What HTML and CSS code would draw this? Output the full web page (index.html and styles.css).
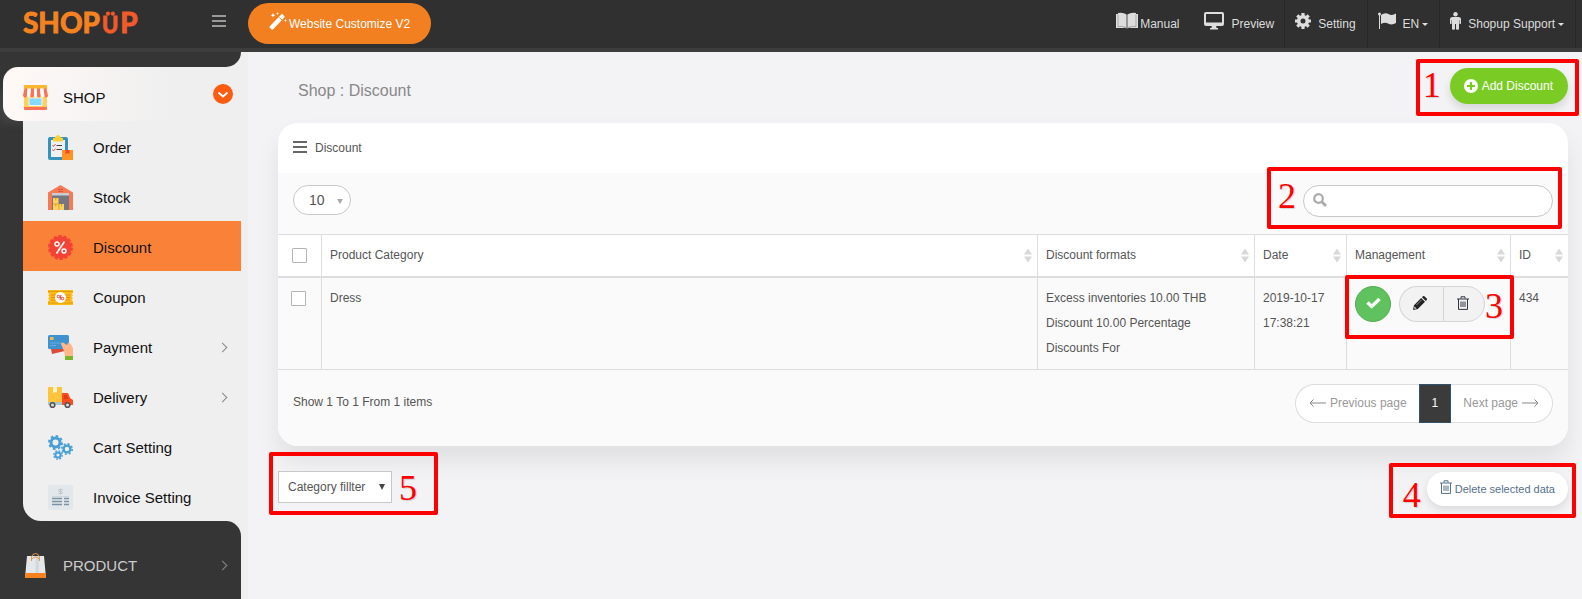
FILE: index.html
```html
<!DOCTYPE html>
<html lang="en">
<head>
    <meta charset="UTF-8">
    <meta name="viewport" content="width=device-width, initial-scale=1.0">
    <title>Shop : Discount</title>
    <link rel="stylesheet" href="styles.css">
</head>
<body>
    <header class="topbar">
        <div class="brand">
            <a class="logo" href="#">SHOP<span class="logo-smile">Ü</span><span class="logo-end">P</span></a>
            <button class="menu-toggle" type="button" aria-label="Toggle menu">
                <svg width="14" height="12" viewBox="0 0 14 12"><path d="M0 1h14M0 6h14M0 11h14" stroke="#999" stroke-width="2"/></svg>
            </button>
        </div>
        <a class="customize" href="#">
            <svg width="18" height="18" viewBox="0 0 18 18" fill="#fff"><path d="M.8 14.200 12.200 2.500q.8-.8 1.600 0l1.500 1.500q.8.800 0 1.600L4.200 17.200q-.8.800-1.600 0L.8 15.800q-.8-.8 0-1.600z"/><path d="M10.500 5.500 13 8" stroke="#f28020"/><path d="m4 1 .7 1.600 1.600.7-1.600.7L4 5.600 3.300 4l-1.600-.7 1.600-.7zM8.500 0l.5 1 1 .5-1 .5-.5 1-.5-1-1-.5 1-.5zM16.500 7l.5 1 1 .5-1 .5-.5 1-.5-1-1-.5 1-.5z"/></svg>
            Website Customize V2
        </a>
        <nav class="topnav">
            <a class="manual" href="#">
                <svg width="22" height="18" viewBox="0 0 22 18" fill="#ddd"><path d="M0 2h2V1q5-1 8.600 1.500v14Q9 15.500 7 16H0zM22 2h-2V1q-5-1-8.600 1.500v14Q13 15.500 15 16h7z"/><path d="M2 2.500v12q4.500-.6 8 1M20 2.500v12q-4.500-.6-8 1" fill="none" stroke="#888" stroke-width=".6"/></svg>
                Manual
            </a>
            <a href="#">
                <svg width="20" height="18" viewBox="0 0 20 18"><rect x="1" y="1" width="18" height="12" rx="1" fill="none" stroke="#ddd" stroke-width="2"/><path d="M1 10.500h18V13H1zM8 13h4l.5 3H14v1.500H6V16h1.500z" fill="#ddd"/></svg>
                Preview
            </a>
            <a class="split" href="#">
                <svg width="16" height="16" viewBox="0 0 16 16"><circle cx="8" cy="8" r="4.300" fill="none" stroke="#ddd" stroke-width="3.600"/><path d="M8 0v3M8 13v3M0 8h3M13 8h3M2.300 2.300l2 2M11.700 11.700l2 2M13.700 2.300l-2 2M4.300 11.700l-2 2" stroke="#ddd" stroke-width="3.200"/></svg>
                Setting
            </a>
            <a class="split" href="#">
                <svg width="18" height="17" viewBox="0 0 18 17" fill="#ddd"><circle cx="1.500" cy="2" r="1.500"/><path d="M1 2h1v15H1zM3 3q4-3 7.500-1T18 1.500V11q-4 2.500-7.500.7T3 12z"/></svg>
                <span>EN<i class="caret"></i></span>
            </a>
            <a class="split" href="#">
                <svg width="11" height="18" viewBox="0 0 11 18" fill="#ddd"><circle cx="5.500" cy="2.200" r="2.200"/><path d="M2 5h7q2 .5 2 2v4.500q-.8 1-1.600 0V8H9v9q-1.500 1.700-3 0v-5H5v5q-1.500 1.700-3 0V8h-.4v3.500q-.8 1-1.600 0V7q0-1.500 2-2z"/></svg>
                <span>Shopup Support<i class="caret"></i></span>
            </a>
        </nav>
    </header>

    <div class="layout">
        <aside class="sidebar">
            <div class="cap"></div>
            <div class="group">
                <a class="group-title" href="#">
                    <svg width="25" height="25" viewBox="0 0 25 25"><path d="M1 6h23v17H1z" fill="#ffd15c"/><path d="M1 1q0-1 1-1h21q1 0 1 1v3H1z" fill="#fdb62f"/><path d="M1 22h23v2q0 1-1 1H2q-1 0-1-1z" fill="#ff7058"/><path d="M6 13h13v7.500H6z" fill="#84dbff" stroke="#f2f2f2"/><path d="M1.500 3.500h3L4 11q-.5 1.500-2 1.500T0 10.500zM8 3.500h3V11q-.5 1.500-1.800 1.500T7.200 11zM14 3.500h3l.8 7.500q-.5 1.500-1.800 1.500T14 11zM20.500 3.500h3L25 10.500q0 2-1.600 2T21.400 11z" fill="#ff7058"/><path d="M4.500 3.500H8L7.200 11q-.5 1.500-1.700 1.500T4 11zM11 3.500h3V11q-.3 1.500-1.500 1.500T11 11zM17 3.500h3.500l.9 7.500q-.5 1.500-1.800 1.500T17.800 11z" fill="#fff"/></svg>
                    <span>SHOP</span>
                    <svg class="open" width="20" height="20" viewBox="0 0 20 20"><circle cx="10" cy="10" r="10" fill="#fc5c10"/><path d="m5.500 8.500 4.500 4 4.500-4" fill="none" stroke="#fff" stroke-width="2"/></svg>
                </a>
                <nav class="submenu">
                    <a href="#">
                        <svg width="25" height="25" viewBox="0 0 25 25"><rect y="2" width="20" height="23" rx="2" fill="#3493bd"/><path d="M3 5h14v17H3z" fill="#eef0f2"/><path d="M5 3q2.500 0 3-1.500Q8.500 0 10 0t2 1.500Q12.500 3 15 3v3.500H5z" fill="#ffcf36"/><path d="m4.500 10 1 1.500L7.500 9M4.500 14.500l1 1.500 2-2.500" fill="none" stroke="#f0503c"/><path d="M8.500 10.500H14M8.500 14.500H14" stroke="#444" stroke-width="1.200"/><path d="M14 15h11v10H14z" fill="#ff9324"/><path d="M17.500 15h4v4l-2-1-2 1z" fill="#f3462b"/></svg>
                        Order
                    </a>
                    <a href="#">
                        <svg width="25" height="25" viewBox="0 0 25 25"><path d="M12.500 0 25 7.500V25H0V7.500z" fill="#f47b55"/><path d="M4 9h17v16H4z" fill="#727780"/><path d="M4 8h17v2.500H4z" fill="#c9cdd2"/><path d="M10 4.500h5M10 6.500h5" stroke="#d9583b"/><path d="M5 13h5.500v6H16v6H5z" fill="#ffd15c"/><path d="M5 19h6v6M7.700 13v2.500M7.700 19v2.500M13.500 19v2.500" fill="none" stroke="#d9a52b"/></svg>
                        Stock
                    </a>
                    <a class="active" href="#">
                        <svg width="25" height="25" viewBox="0 0 25 25"><circle cx="12.500" cy="12.500" r="11" fill="#f44336"/><circle cx="12.500" cy="12.500" r="11" fill="none" stroke="#f44336" stroke-width="3" stroke-dasharray="3.300 1.640"/><circle cx="9" cy="9" r="2" fill="none" stroke="#fff" stroke-width="1.500"/><circle cx="16" cy="16" r="2" fill="none" stroke="#fff" stroke-width="1.500"/><path d="m16.500 6.500-8 12" stroke="#fff" stroke-width="1.600"/></svg>
                        Discount
                    </a>
                    <a href="#">
                        <svg width="25" height="25" viewBox="0 0 25 25"><path d="M0 5h25v3l-1.500 1L25 10.500l-1.500 1.500 1.500 1.500-1.500 1.500L25 16.500V20H0v-3.500L1.500 15 0 13.500 1.500 12 0 10.500 1.500 9 0 8z" fill="#fbbc16"/><path d="M0 6.500h25M0 18h25" stroke="#e49c0c"/><path d="M3 10h5M3 12.500h5M3 15h5M17 10h5M17 12.500h5M17 15h5" stroke="#ee8a14"/><circle cx="12.500" cy="12.500" r="5.500" fill="#fff"/><circle cx="10.500" cy="11.500" r="1.300" fill="none" stroke="#e6493a"/><circle cx="14.500" cy="13.500" r="1.300" fill="none" stroke="#e6493a"/><path d="m12 15 1-5" stroke="#e6493a"/></svg>
                        Coupon
                    </a>
                    <a class="has-sub" href="#">
                        <svg width="25" height="25" viewBox="0 0 25 25"><path d="m3 14 16-3 2 4-17 4z" fill="#dc4a3c"/><rect width="21" height="14" rx="1.500" fill="#3e92d0"/><path d="M2 2h3.500v3H2z" fill="#f8b84e"/><path d="M2 8h11M2 10.500h6" stroke="#63acdf"/><path d="M13 9q0-2 2-1.500l4 2.500 1-2q1-1 2 0l3 5v8h-8l-1-5z" fill="#fdb789"/><path d="M17 21h8v4h-8z" fill="#7cb52c"/></svg>
                        Payment
                    </a>
                    <a class="has-sub" href="#">
                        <svg width="25" height="25" viewBox="0 0 25 25"><path d="M0 2h14v15H0z" fill="#ffc43c"/><path d="M5 2h4v6L7 7 5 8z" fill="#fff3d2"/><path d="M14 8h6l2 5 3 2v5H14z" fill="#ff4b20"/><path d="M16 10h3l1 4h-4z" fill="#e23a1a"/><path d="M0 17h14v3H0z" fill="#a9c9cb"/><circle cx="4.500" cy="20" r="2.300" fill="#ddd" stroke="#555" stroke-width="1.600"/><circle cx="19.500" cy="20" r="2.300" fill="#ddd" stroke="#555" stroke-width="1.600"/></svg>
                        Delivery
                    </a>
                    <a href="#">
                        <svg width="25" height="25" viewBox="0 0 25 25" fill="none" stroke="#479fd6"><circle cx="7.500" cy="7.500" r="4.500" stroke-width="3"/><circle cx="7.500" cy="7.500" r="6.600" stroke-width="1.800" stroke-dasharray="2.600 2.580"/><circle cx="19" cy="14" r="3.400" stroke-width="2.400"/><circle cx="19" cy="14" r="5.200" stroke-width="1.600" stroke-dasharray="2 2.080"/><circle cx="10" cy="20" r="2.600" stroke-width="2"/><circle cx="10" cy="20" r="4.200" stroke-width="1.400" stroke-dasharray="1.700 1.600"/></svg>
                        Cart Setting
                    </a>
                    <a href="#">
                        <svg width="25" height="25" viewBox="0 0 25 25"><rect width="25" height="25" rx="2" fill="#e1e7ea"/><path d="M15 5q-2.500-1.500-4.500 0 0 1.500 2 1.500t2 1.500q-2 1.500-4.500 0M12.500 3.500v6" fill="none" stroke="#c0c8cd"/><path d="M4 11.500h17" stroke="#cdd5da"/><path d="M4 13.500h10M4 16.500h10M4 19.500h10M16 13.500h5M16 16.500h5M16 19.500h5" stroke="#7b93a5" stroke-width="1.400"/></svg>
                        Invoice Setting
                    </a>
                </nav>
            </div>
            <nav class="closed">
                <a class="has-sub" href="#">
                    <svg width="25" height="25" viewBox="0 0 25 25"><path d="M4 3h17l2 22H2z" fill="#e4e8ea"/><path d="M12.500 3H16v17h-3.500z" fill="#d3d9dd"/><path d="M2.500 20h20l.5 5H2z" fill="#f5811f"/><path d="M8.500 8V4q1-3.500 4-3.500t4 3.500v4M9 6q3.500-4 7 0" fill="none" stroke="#e09a55"/></svg>
                    PRODUCT
                </a>
            </nav>
        </aside>

        <main class="content">
            <div class="page-head">
                <h1>Shop : Discount</h1>
                <div class="add-wrap">
                    <button class="add" type="button">
                        <svg width="14" height="14" viewBox="0 0 14 14"><circle cx="7" cy="7" r="7" fill="#fff"/><path d="M7 3v8M3 7h8" stroke="#7acc24" stroke-width="2.200"/></svg>
                        Add Discount
                    </button>
                    <span class="mark mark-add">1</span>
                </div>
            </div>

            <section class="card">
                <h2>
                    <svg width="14" height="12" viewBox="0 0 14 12"><path d="M0 1h14M0 6h14M0 11h14" stroke="#666" stroke-width="2"/></svg>
                    Discount
                </h2>
                <div class="toolbar">
                    <div class="length">
                        <select aria-label="Rows per page"><option>10</option></select>
                    </div>
                    <div class="search">
                        <svg width="14" height="14" viewBox="0 0 14 14"><circle cx="5.500" cy="5.500" r="4.300" fill="none" stroke="#aaa" stroke-width="2.200"/><path d="m9 9 4 4" stroke="#aaa" stroke-width="2.600"/></svg>
                        <input type="search" aria-label="Search">
                        <span class="mark mark-search">2</span>
                    </div>
                </div>
                <table>
                    <colgroup>
                        <col class="c-check"><col><col class="c-format"><col class="c-date"><col class="c-manage"><col class="c-id">
                    </colgroup>
                    <thead>
                        <tr>
                            <th class="check"><input type="checkbox" aria-label="Select all"></th>
                            <th><button class="sort" type="button">Product Category</button></th>
                            <th><button class="sort" type="button">Discount formats</button></th>
                            <th><button class="sort" type="button">Date</button></th>
                            <th><button class="sort" type="button">Management</button></th>
                            <th><button class="sort" type="button">ID</button></th>
                        </tr>
                    </thead>
                    <tbody>
                        <tr>
                            <td class="check"><input type="checkbox" aria-label="Select Dress"></td>
                            <td>Dress</td>
                            <td>Excess inventories 10.00 THB<br>Discount 10.00 Percentage<br>Discounts For</td>
                            <td>2019-10-17 17:38:21</td>
                            <td>
                                <div class="actions">
                                    <button class="status" type="button" aria-label="Enabled">
                                        <svg width="15" height="12" viewBox="0 0 15 12"><path d="m1.500 5.500 4.200 4L13.500 2" fill="none" stroke="#fff" stroke-width="3.400"/></svg>
                                    </button>
                                    <div class="pair">
                                        <button type="button" aria-label="Edit">
                                            <svg width="14" height="14" viewBox="0 0 14 14" fill="#222"><path d="m0 14 1-4.800L8.200 2 12 5.800 4.800 13zM9 1.200l.9-.9q.8-.6 1.500 0l2.300 2.300q.6.700 0 1.500l-.9.900z"/><path d="m1.500 10.500 2 2-1.800.3-.5-.5z" fill="#f2f2f2"/><path d="m3.500 9 5-5" stroke="#aaa" stroke-width=".8"/></svg>
                                        </button>
                                        <button type="button" aria-label="Delete">
                                            <svg width="12" height="14" viewBox="0 0 12 14"><path d="M0 3h12M4 2.500V.8h4v1.700M1.500 3v10.400h9V3M4 5.500v5.500M6 5.500v5.500M8 5.500v5.500" fill="none" stroke="#334"/></svg>
                                        </button>
                                    </div>
                                    <span class="mark mark-actions">3</span>
                                </div>
                            </td>
                            <td>434</td>
                        </tr>
                    </tbody>
                </table>
                <div class="card-foot">
                    <p>Show 1 To 1 From 1 items</p>
                    <nav class="pages" aria-label="Pages">
                        <a href="#">
                            <svg width="17" height="8" viewBox="0 0 17 8"><path d="M17 4H1M4.500.5 1 4l3.500 3.500" fill="none" stroke="#888"/></svg>
                            Previous page
                        </a>
                        <a class="current" href="#">1</a>
                        <a href="#">
                            Next page
                            <svg width="17" height="8" viewBox="0 0 17 8"><path d="M0 4h16M12.500.5 16 4l-3.500 3.500" fill="none" stroke="#888"/></svg>
                        </a>
                    </nav>
                </div>
            </section>

            <div class="below">
                <div class="filter">
                    <select aria-label="Category"><option>Category fillter</option></select>
                    <span class="mark mark-filter">5</span>
                </div>
                <div class="remove-wrap">
                    <button class="remove" type="button">
                        <svg width="12" height="14" viewBox="0 0 12 14"><path d="M0 3h12M4 2.500V.8h4v1.700M1.500 3v10.400h9V3M4 5.500v5.500M6 5.500v5.500M8 5.500v5.500" fill="none" stroke="#54708c"/></svg>
                        Delete selected data
                    </button>
                    <span class="mark mark-remove">4</span>
                </div>
            </div>
        </main>
    </div>
</body>
</html>
```

FILE: styles.css
```css
* {
    box-sizing: border-box;
}

body {
    display: flex;
    flex-direction: column;
    min-height: 100vh;
    margin: 0;
    background: #f3f3f6;
    color: #555;
    font-family: "Liberation Sans", Arial, sans-serif;
    font-size: 12px;
}

a {
    color: inherit;
    text-decoration: none;
}

button, input, select {
    font: inherit;
    color: inherit;
}

svg {
    display: block;
    flex: none;
}

/* top bar */
.topbar {
    display: flex;
    height: 52px;
    background: #303030;
    border-bottom: 4px solid #3d3d3d;
    color: #ddd;
}

.brand {
    display: flex;
    justify-content: space-between;
    width: 248px;
    padding: 0 22px 0 23px;
}

.logo {
    display: flex;
    align-items: baseline;
    color: #f58220;
    font: 700 28px/44px Lato, sans-serif;
    -webkit-text-stroke: 1px;
}

.logo-smile {
    padding: 0 2px;
    color: #f15a29;
    font-size: 22px;
}

.logo-end {
    color: #f15a29;
}

.menu-toggle {
    height: 42px;
    padding: 0;
    background: none;
    border: 0;
}

.customize {
    display: flex;
    align-items: center;
    gap: 2px;
    height: 41px;
    margin-top: 3px;
    padding: 0 21px;
    background: #f28020;
    border-radius: 21px;
    color: #fff;
}

.customize svg {
    margin-bottom: 6px;
}

.topnav {
    display: flex;
    margin-left: auto;
    margin-right: 6px;
    border-right: 1px solid #262626;
}

.topnav a {
    display: flex;
    align-items: center;
    gap: 8px;
    height: 47px;
    padding: 0 10px;
}

.topnav a svg {
    margin-bottom: 6px;
}

.topnav .manual {
    gap: 2px;
    padding-right: 14px;
}

.topnav .split {
    gap: 7px;
    padding: 0 11px 0 10px;
    border-left: 1px solid #262626;
}

.caret {
    display: inline-block;
    margin-left: 3px;
    border: 3px solid transparent;
    border-top-color: #ddd;
    border-bottom: 0;
    vertical-align: middle;
}

/* sidebar */
.layout {
    display: flex;
    flex: 1;
}

.sidebar {
    display: flex;
    flex: none;
    flex-direction: column;
    width: 248px;
    padding-right: 7px;
    background: #efefef;
    font-size: 15px;
}

.cap {
    height: 15px;
    background: #353535;
    border-bottom-right-radius: 15px;
}

.group {
    background: #353535;
}

.group-title {
    display: flex;
    align-items: center;
    gap: 15px;
    height: 54px;
    margin-left: 3px;
    padding: 6px 8px 0 20px;
    background: linear-gradient(to right, #fff9f7, #efefef 70%);
    border-radius: 15px 0 0 15px;
    box-shadow: -14px 12px 10px -10px rgba(130, 130, 130, .2);
    color: #111;
}

.group-title .open {
    margin: 0 0 6px auto;
}

.submenu {
    margin-left: 23px;
    background: #efefef;
    border-bottom-left-radius: 18px;
}

.submenu a {
    display: flex;
    align-items: center;
    gap: 20px;
    height: 50px;
    padding: 2px 15px 0 25px;
    color: #111;
}

.submenu .active {
    background: #fa8238;
}

.has-sub::after {
    width: 6px;
    height: 6px;
    margin-left: auto;
    border: solid #888;
    border-width: 1px 1px 0 0;
    content: "";
    transform: rotate(45deg);
}

.closed {
    flex: 1;
    background: #353535;
    border-top-right-radius: 15px;
}

.closed a {
    display: flex;
    align-items: center;
    gap: 15px;
    padding: 32px 15px 0 23px;
    color: #ccc;
}

/* content */
.content {
    flex: 1;
    min-width: 0;
    padding: 16px 14px 0 30px;
}

.page-head {
    display: flex;
    align-items: center;
    justify-content: space-between;
    margin-bottom: 19px;
}

h1 {
    margin: 10px 0 0 20px;
    color: #888;
    font-size: 16px;
    font-weight: 400;
    line-height: 20px;
}

.add-wrap, .search, .actions, .filter, .remove-wrap {
    position: relative;
}

.add {
    display: flex;
    align-items: center;
    gap: 4px;
    height: 36px;
    padding: 0 15px 0 14px;
    background: #7acc24;
    border: 0;
    border-radius: 18px;
    box-shadow: 0 5px 8px rgba(0, 0, 0, .12);
    color: #fff;
}

.card {
    background: #fff;
    border-radius: 20px;
    box-shadow: 0 15px 25px rgba(0, 0, 0, .08);
}

h2 {
    display: flex;
    align-items: center;
    gap: 8px;
    height: 50px;
    margin: 0;
    padding: 0 15px;
    font-size: 12px;
    font-weight: 400;
}

h2 svg {
    margin-bottom: 3px;
}

.toolbar {
    display: flex;
    align-items: flex-start;
    justify-content: space-between;
    height: 61px;
    padding: 12px 15px 0;
    background: #fafafa;
}

.length {
    position: relative;
}

.length select {
    width: 58px;
    height: 30px;
    padding: 0 15px;
    appearance: none;
    background: #fff;
    border: 1px solid #c8c8c8;
    border-radius: 15px;
    font-size: 14px;
}

.length::after {
    position: absolute;
    top: 14px;
    right: 8px;
    border: 3px solid transparent;
    border-top: 5px solid #aaa;
    border-bottom: 0;
    content: "";
}

.search input {
    display: block;
    width: 250px;
    height: 32px;
    padding: 0 12px 0 30px;
    background: #fff;
    border: 1px solid #c8c8c8;
    border-radius: 16px;
}

.search svg {
    position: absolute;
    top: 8px;
    left: 10px;
}

table {
    width: 100%;
    border-top: 1px solid #ddd;
    border-spacing: 0;
    table-layout: fixed;
}

.c-check {
    width: 43px;
}

.c-format {
    width: 217px;
}

.c-date {
    width: 92px;
}

.c-manage {
    width: 164px;
}

.c-id {
    width: 58px;
}

th, td {
    padding: 8px;
    border-bottom: 1px solid #ddd;
    border-left: 1px solid #ddd;
    font-weight: 400;
    line-height: 25px;
    text-align: left;
    vertical-align: top;
}

th {
    padding-right: 5px;
    border-bottom-width: 2px;
}

td {
    background: #fafafa;
}

.check {
    padding: 13px;
    border-left: 0;
    line-height: 0;
}

th.check {
    padding-left: 14px;
}

.check input {
    width: 15px;
    height: 15px;
    margin: 0;
    appearance: none;
    background: #fff;
    border: 1px solid #b4b4b4;
    border-radius: 1px;
}

.sort {
    display: flex;
    align-items: center;
    justify-content: space-between;
    width: 100%;
    height: 25px;
    padding: 0;
    background: none;
    border: 0;
}

.sort::after {
    width: 8px;
    height: 14px;
    background: #d8d8d8;
    clip-path: polygon(50% 0, 100% 6px, 0 6px, 0 8px, 100% 8px, 50% 100%, 0 8px, 0 6px);
    content: "";
}

.actions {
    display: inline-flex;
    gap: 8px;
}

.actions button {
    display: flex;
    align-items: center;
    justify-content: center;
    height: 36px;
    padding: 0 0 3px;
}

.actions .status {
    width: 36px;
    background: #5fc25f;
    border: 1px solid #53ab53;
    border-radius: 18px;
}

.pair {
    display: flex;
}

.pair button {
    width: 42px;
    padding-right: 3px;
    background: #f2f2f2;
    border: 1px solid #d5d5d5;
    border-radius: 0 18px 18px 0;
}

.pair button:first-child {
    width: 44px;
    border-right: 0;
    border-radius: 18px 0 0 18px;
}

.card-foot {
    display: flex;
    justify-content: space-between;
    height: 76px;
    padding: 14px 15px 0;
    background: #fafafa;
    border-radius: 0 0 20px 20px;
}

.card-foot p {
    margin: 0;
    line-height: 36px;
}

.pages {
    display: flex;
    height: 39px;
}

.pages a {
    display: flex;
    align-items: center;
    gap: 4px;
    padding: 0 12px 2px 13px;
    background: #fff;
    border: 1px solid #ddd;
    border-right: 0;
    border-radius: 20px 0 0 20px;
    color: #999;
}

.pages a:last-child {
    padding: 0 13px 2px 12px;
    border-right: 1px solid #ddd;
    border-left: 0;
    border-radius: 0 20px 20px 0;
}

.pages .current {
    padding: 0 12px 2px;
    background: #3b3b3b;
    border: 1px solid #33526b;
    border-radius: 0;
    color: #fff;
}

.below {
    display: flex;
    align-items: flex-start;
    justify-content: space-between;
    padding-top: 25px;
}

.filter select {
    width: 114px;
    height: 32px;
    padding: 0 9px;
    appearance: none;
    background: #fff;
    border: 1px solid #c8c8c8;
}

.filter::after {
    position: absolute;
    top: 13px;
    right: 7px;
    border: 3px solid transparent;
    border-top: 6px solid #444;
    border-bottom: 0;
    content: "";
}

.remove {
    display: flex;
    align-items: center;
    gap: 3px;
    height: 34px;
    margin-top: 1px;
    padding: 0 13px;
    background: #fff;
    border: 0;
    border-radius: 17px;
    box-shadow: 0 4px 8px rgba(0, 0, 0, .1);
    color: #54708c;
    font-size: 11px;
}

.remove svg {
    margin-bottom: 4px;
}

/* numbered callouts over the controls */
.mark {
    position: absolute;
    z-index: 1;
    display: flex;
    align-items: center;
    border: 4px solid #f00;
    border-radius: 2px;
    color: #f00;
    font: 36px/36px "Liberation Serif", serif;
    pointer-events: none;
    text-shadow: 1px 1px 1px rgba(0, 0, 0, .15);
}

.mark-add {
    inset: -9px -11px -12px -34px;
    padding: 0 0 5px 3px;
}

.mark-search {
    inset: -18px -9px -12px -36px;
    padding: 0 0 4px 7px;
}

.mark-actions {
    inset: -11px -29px -17px -10px;
    justify-content: flex-end;
    padding: 0 7px 3px 0;
}

.mark-filter {
    inset: -19px -46px -12px -9px;
    justify-content: flex-end;
    padding: 8px 17px 0 0;
}

.mark-remove {
    inset: -8px -8px -12px -38px;
    padding: 9px 0 0 10px;
}
```
